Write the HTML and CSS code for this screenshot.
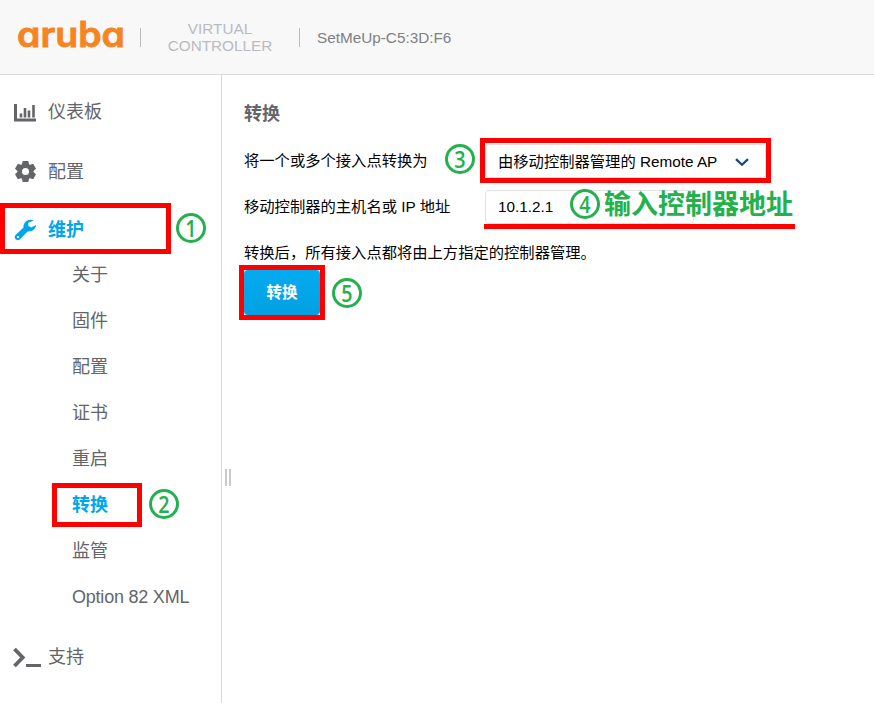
FILE: index.html
```html
<!DOCTYPE html>
<html lang="zh-CN">
<head>
<meta charset="utf-8">
<title>Aruba Virtual Controller</title>
<link rel="stylesheet" href="styles.css">
</head>
<body>
<header class="topbar">
  <svg class="logo" width="108" height="36" viewBox="0 0 108 36"><text class="logo-text" x="0" y="29" textLength="108" lengthAdjust="spacingAndGlyphs">aruba</text></svg>
  <i class="divider"></i>
  <div class="product">VIRTUAL<br>CONTROLLER</div>
  <i class="divider"></i>
  <div class="device">SetMeUp-C5:3D:F6</div>
</header>
<div class="body">
  <nav class="sidebar">
    <a class="item dashboard">
      <svg class="icon" width="28" height="24" viewBox="0 0 28 24"><path d="M2.500 4v16h20.500" fill="none" stroke="currentColor" stroke-width="3"/><path d="M8 13.500v4M12 8v9.500M16 10.500v7M20.500 5v12.500" stroke="currentColor" stroke-width="2.600"/></svg>
      <span>仪表板</span>
    </a>
    <a class="item settings">
      <svg class="icon" width="28" height="24" viewBox="0 0 28 24"><g fill="currentColor" transform="translate(12.500 11.500)"><path fill-rule="evenodd" d="M-8 0a8 8 0 1 0 16 0a8 8 0 1 0-16 0M-3.500 0a3.500 3.500 0 1 0 7 0a3.500 3.500 0 1 0-7 0"/><path id="tooth" d="M-3.700-6.500l.9-4h5.600l.9 4z"/><use href="#tooth" transform="rotate(60)"/><use href="#tooth" transform="rotate(120)"/><use href="#tooth" transform="rotate(180)"/><use href="#tooth" transform="rotate(240)"/><use href="#tooth" transform="rotate(300)"/></g></svg>
      <span>配置</span>
    </a>
    <a class="item maintenance active">
      <svg class="icon" width="28" height="24" viewBox="0 0 28 24"><path fill="currentColor" fill-rule="evenodd" d="M20.800 1.500C16-.8 10.200 2.300 10.500 8.400L2.600 15.900c-2.600 3 1.200 7 4.400 4.400l7.600-7.800c4.400.5 7.900-1.900 8.500-6.400l-4.800 2.400-3-1.700-.1-3.100zM3.900 18.100a1.100 1.100 0 1 0 2.200 0a1.100 1.100 0 1 0-2.200 0"/></svg>
      <span>维护</span>
    </a>
    <div class="submenu">
      <a>关于</a>
      <a>固件</a>
      <a>配置</a>
      <a>证书</a>
      <a>重启</a>
      <a class="active">转换</a>
      <a>监管</a>
      <a>Option 82 XML</a>
    </div>
    <a class="item support">
      <svg class="icon" width="28" height="24" viewBox="0 0 28 24"><path d="M1.500 4l8.200 8.500-8.200 8.500" fill="none" stroke="currentColor" stroke-width="3.800"/><path d="M13 20.500h15" stroke="currentColor" stroke-width="3"/></svg>
      <span>支持</span>
    </a>
  </nav>
  <div class="grip"><i></i><i></i></div>
  <main class="content">
    <h1>转换</h1>
    <div class="row">
      <label>将一个或多个接入点转换为</label>
      <div class="field select"><span>由移动控制器管理的 Remote AP</span><svg width="14" height="9" viewBox="0 0 14 9"><path d="M1 1.200l6 5.600 6-5.600" fill="none" stroke="#164a78" stroke-width="2.300"/></svg></div>
    </div>
    <div class="row">
      <label>移动控制器的主机名或 IP 地址</label>
      <div class="field host">10.1.2.1</div>
    </div>
    <p>转换后，所有接入点都将由上方指定的控制器管理。</p>
    <button class="convert">转换</button>
  </main>
</div>

<div class="mark mark-1"></div>
<div class="mark mark-2"></div>
<div class="mark mark-3"></div>
<div class="mark mark-5"></div>
<div class="underline"></div>
<div class="step step-1"><span>1</span></div>
<div class="step step-2"><span>2</span></div>
<div class="step step-3"><span>3</span></div>
<div class="step step-4"><span>4</span></div>
<div class="step step-5"><span>5</span></div>
<div class="note">输入控制器地址</div>
</body>
</html>
```
FILE: styles.css
```css
* { box-sizing: border-box; }
body {
  margin: 0;
  width: 874px;
  height: 703px;
  overflow: hidden;
  position: relative;
  display: flex;
  flex-direction: column;
  background: #fff;
  color: #000;
  font: 15px/20px "Liberation Sans", "Noto Sans CJK SC", sans-serif;
}
.topbar {
  flex: none;
  height: 75px;
  padding-left: 17px;
  display: flex;
  align-items: center;
  background: #f8f8f8;
  border-bottom: 1px solid #d9d9d9;
}
.logo { display: block; overflow: visible; margin-bottom: 3px; }
.logo-text {
  font: 600 35px Inter, sans-serif;
  font-feature-settings: "cv11";
  fill: #f68422;
  stroke: #f68422;
  stroke-width: .8px;
}
.divider { width: 1px; height: 19px; background: #bcbcbc; }
.logo + .divider { margin-left: 15px; }
.product {
  width: 158px;
  text-align: center;
  color: #b9bbc0;
  font-size: 15.3px;
  line-height: 17px;
}
.device { margin-left: 17px; font-size: 15.3px; color: #808080; padding-top: 1px; }
.body { flex: 1; display: flex; min-height: 0; }
.sidebar {
  flex: none;
  width: 222px;
  border-right: 1px solid #d9d9d9;
  color: #646569;
  font-size: 18px;
  line-height: 26px;
}
.item {
  display: flex;
  align-items: center;
  height: 59px;
  padding-left: 13px;
}
.item span { margin-left: 7px; }
.dashboard { height: 60px; margin-top: 7px; }
.maintenance span { padding-bottom: 2px; }
.icon { display: block; flex: none; }
.active { color: #01a5ee; font-weight: bold; }
.submenu { display: flex; flex-direction: column; padding-left: 72px; margin-top: -8px; }
.submenu a { height: 46px; line-height: 46px; }
.submenu a:last-child { letter-spacing: -.22px; }
.support { margin-top: 7px; }
.grip { display: flex; gap: 2px; width: 12px; padding-left: 3px; align-self: flex-start; margin-top: 394px; }
.grip i { width: 2px; height: 17px; background: #cbcbcf; }
.content { flex: 1; padding: 26px 0 0 10px; }
h1 { margin: 0; font-size: 18px; line-height: 26px; color: #646569; }
.row { display: flex; height: 46px; align-items: center; }
h1 + .row { margin-top: 11px; }
label { width: 241px; flex: none; font-size: 15.3px; white-space: nowrap; }
.field {
  display: flex;
  align-items: center;
  height: 34px;
  padding-left: 12px;
  border: 1px solid #e2e2e2;
  border-radius: 4px;
}
.select { width: 281px; font-size: 15.3px; }
.select span { padding-top: 1px; }
.select svg { margin-left: 18px; margin-top: 2px; }
.host { width: 209px; font-size: 15.3px; }
p { margin: 0; height: 46px; line-height: 46px; font-size: 15.3px; }
.convert {
  display: block;
  width: 76px;
  height: 45px;
  margin-top: -6px;
  padding: 0 0 3px;
  border: 0;
  border-radius: 4px;
  background: linear-gradient(#05abef, #03a0e3);
  color: #fff;
  font: bold 15.5px "Liberation Sans", "Noto Sans CJK SC", sans-serif;
}
.mark { position: absolute; border: 5px solid #f00; }
.mark-1 { left: 0; top: 203px; width: 171px; height: 51px; }
.mark-2 { left: 52px; top: 483px; width: 90px; height: 44px; }
.mark-3 { left: 480px; top: 138px; width: 291px; height: 45px; }
.mark-5 { left: 239px; top: 265px; width: 86px; height: 55px; }
.underline { position: absolute; left: 484px; top: 224px; width: 311px; height: 5px; background: #f00; }
.step {
  position: absolute;
  width: 30px;
  height: 30px;
  border: 3px solid #22b14c;
  border-radius: 50%;
  color: #22b14c;
  font: 600 24px/23px "Open Sans", sans-serif;
  text-align: center;
}
.step span { display: block; transform: scaleX(.82); }
.step-1 { left: 176px; top: 213px; }
.step-2 { left: 149px; top: 489px; }
.step-3 { left: 445px; top: 144px; }
.step-4 { left: 570px; top: 189px; }
.step-5 { left: 332px; top: 278px; }
.note {
  position: absolute;
  left: 604px;
  top: 184px;
  color: #22b14c;
  font: bold 27px/38px "Noto Sans CJK SC", sans-serif;
  white-space: nowrap;
}
```
